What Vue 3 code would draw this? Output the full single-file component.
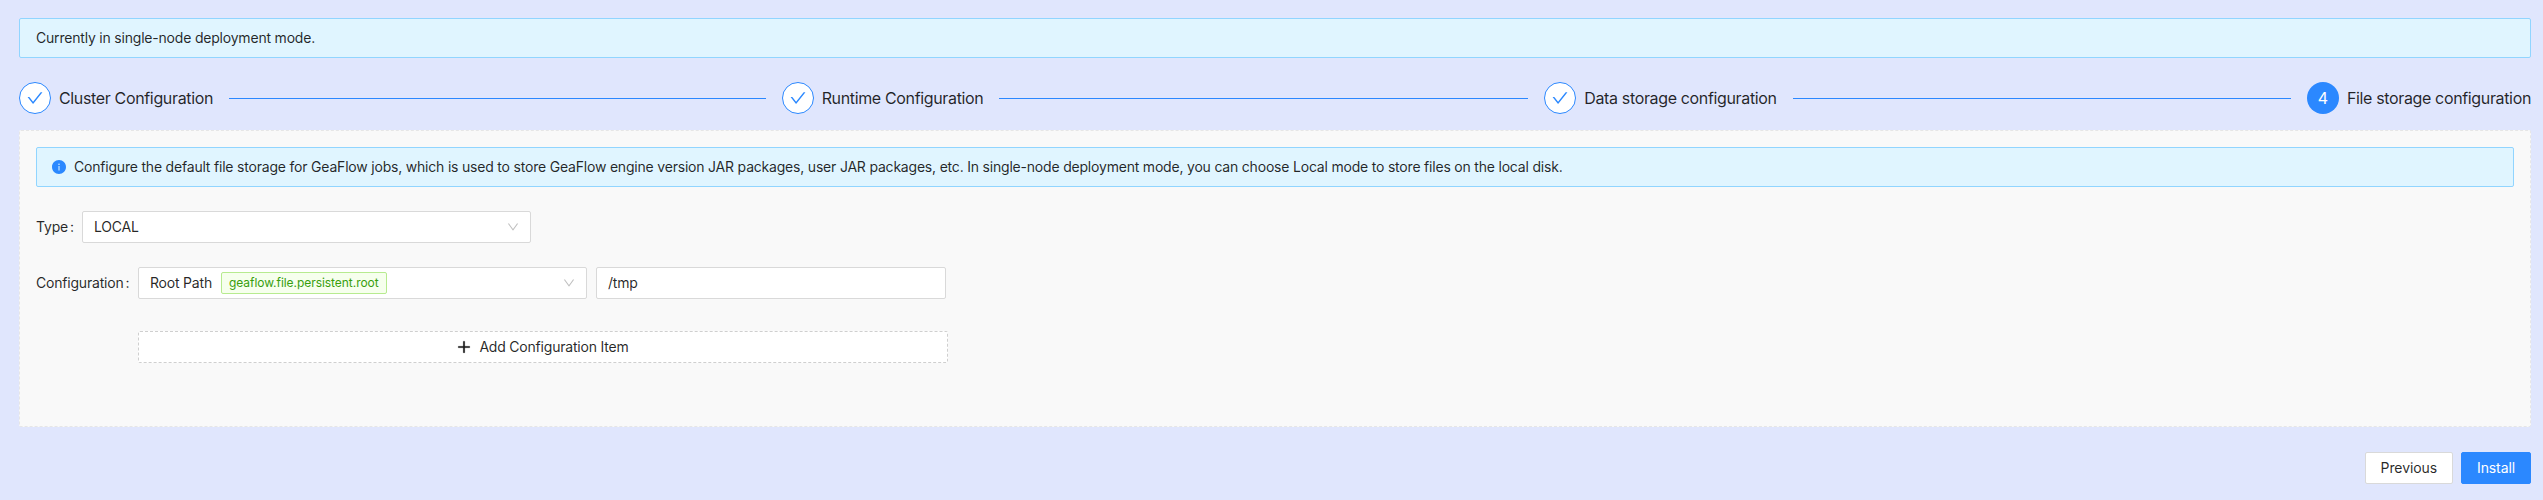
<script setup>
const check = 'M912 190h-69.9c-9.8 0-19.1 4.5-25.1 12.2L404.7 724.5 207 474a32 32 0 0 0-25.1-12.2H112c-6.7 0-10.4 7.7-6.3 12.9l273.9 347c12.8 16.2 37.4 16.2 50.3 0l488.4-618.9c4.1-5.1.4-12.8-6.3-12.8z'
const down = 'M884 256h-75c-5.1 0-9.9 2.5-12.9 6.6L512 654.2 227.9 262.6c-3-4.1-7.8-6.6-12.9-6.6h-75c-6.1 0-9.7 6.9-6.1 11.9l352.2 485.4c12.8 17.6 39 17.6 51.7 0l352.2-485.4c3.7-5 .1-11.9-6-11.9z'
const info = 'M512 64C264.6 64 64 264.6 64 512s200.6 448 448 448 448-200.6 448-448S759.4 64 512 64zm32 664c0 4.4-3.6 8-8 8h-48c-4.4 0-8-3.6-8-8V456c0-4.4 3.6-8 8-8h48c4.4 0 8 3.6 8 8v272zm-32-344a48.01 48.01 0 0 1 0-96 48.01 48.01 0 0 1 0 96z'
const plus = 'M482 152h60q8 0 8 8v704q0 8-8 8h-60q-8 0-8-8V160q0-8 8-8Z M192 474h672q8 0 8 8v60q0 8-8 8H160q-8 0-8-8v-60q0-8 8-8Z'
const steps = ['Cluster Configuration', 'Runtime Configuration', 'Data storage configuration']
</script>

<template>
  <div class="page">
    <div class="alert top-alert">Currently in single-node deployment mode.</div>

    <div class="steps">
      <div v-for="s in steps" :key="s" class="step">
        <span class="circle done">
          <svg viewBox="64 64 896 896" width="16" height="16" fill="#2b88ff"><path :d="check" /></svg>
        </span>
        <span class="step-title">{{ s }}</span>
        <span class="line"></span>
      </div>
      <div class="step last">
        <span class="circle active">4</span>
        <span class="step-title">File storage configuration</span>
      </div>
    </div>

    <div class="panel">
      <div class="alert info-alert">
        <svg class="info-icon" viewBox="64 64 896 896" width="14" height="14" fill="#2b88ff"><path :d="info" /></svg>
        <span>Configure the default file storage for GeaFlow jobs, which is used to store GeaFlow engine version JAR packages, user JAR packages, etc. In single-node deployment mode, you can choose Local mode to store files on the local disk.</span>
      </div>

      <div class="row type-row">
        <label class="label">Type<span class="colon">:</span></label>
        <div class="control select">
          <span>LOCAL</span>
          <svg class="arrow" viewBox="64 64 896 896" width="12" height="12" fill="#bfbfbf"><path :d="down" /></svg>
        </div>
      </div>

      <div class="row config-row">
        <label class="label">Configuration<span class="colon">:</span></label>
        <div class="control select">
          <span class="path-name">Root Path</span>
          <span class="tag">geaflow.file.persistent.root</span>
          <svg class="arrow" viewBox="64 64 896 896" width="12" height="12" fill="#bfbfbf"><path :d="down" /></svg>
        </div>
        <div class="control input">/tmp</div>
      </div>

      <div class="add-wrap">
        <div class="add">
          <svg viewBox="64 64 896 896" width="14" height="14" fill="#1a1a1a" stroke="#1a1a1a" stroke-width="40"><path :d="plus" /></svg>
          <span>Add Configuration Item</span>
        </div>
      </div>
    </div>

    <div class="footer">
      <div class="btn">Previous</div>
      <div class="btn primary">Install</div>
    </div>
  </div>
</template>

<style>
html, body { margin: 0; background: #e0e6fd; }
</style>

<style scoped>
.page {
  box-sizing: border-box;
  height: 500px;
  padding: 18px 12px 0 19px;
  background: #e0e6fd;
  font-family: Inter, "Liberation Sans", sans-serif;
  font-size: 14px;
  line-height: 22px;
  letter-spacing: -0.2px;
  color: rgba(0, 0, 0, 0.85);
}
.alert {
  box-sizing: border-box;
  height: 40px;
  background: #e0f5ff;
  border: 1px solid #91d5ff;
  border-radius: 2px;
  display: flex;
  align-items: center;
}
.top-alert { padding: 0 16px; }
.steps { display: flex; margin-top: 24px; height: 32px; }
.step { flex: 1; display: flex; align-items: center; min-width: 0; }
.step.last { flex: none; }
.circle {
  box-sizing: border-box;
  width: 32px;
  height: 32px;
  border-radius: 50%;
  flex: none;
  display: flex;
  align-items: center;
  justify-content: center;
  font-size: 16px;
}
.circle.done { border: 1px solid #2b88ff; background: #fff; }
.circle.active { background: #2b88ff; color: #fff; }
.step-title { margin-left: 8px; font-size: 16px; letter-spacing: -0.35px; white-space: nowrap; }
.line { flex: 1; height: 1px; margin: 0 16px; background: #2b88ff; }
.panel {
  box-sizing: border-box;
  height: 297px;
  margin-top: 16px;
  padding: 16px;
  background: #f9f9f9;
  border: 1px dashed #e6e6e6;
  border-radius: 2px;
}
.info-alert { padding: 0 15px; }
.info-icon { flex: none; margin-right: 8px; }
.row { display: flex; align-items: center; }
.type-row { margin-top: 24px; }
.config-row { margin-top: 24px; }
.label { white-space: nowrap; width: 46px; flex: none; }
.config-row .label { width: 102px; }
.colon { margin-left: 2px; }
.control {
  box-sizing: border-box;
  height: 32px;
  background: #fff;
  border: 1px solid #d9d9d9;
  border-radius: 2px;
  display: flex;
  align-items: center;
  padding: 0 11px;
}
.select { width: 449px; position: relative; }
.arrow { position: absolute; right: 11px; top: 9px; }
.path-name { margin-right: 9px; }
.tag {
  box-sizing: border-box;
  height: 22px;
  padding: 0 7px;
  display: flex;
  align-items: center;
  font-size: 12px;
  line-height: 20px;
  letter-spacing: -0.05px;
  color: #389e0d;
  background: #f6ffed;
  border: 1px solid #b7eb8f;
  border-radius: 2px;
}
.input { width: 350px; margin-left: 9px; }
.add-wrap { margin-top: 32px; padding-left: 102px; }
.add {
  box-sizing: border-box;
  width: 810px;
  height: 32px;
  background: #fff;
  border: 1px dashed #cfcfcf;
  border-radius: 2px;
  display: flex;
  align-items: center;
  justify-content: center;
  gap: 8px;
}
.footer { display: flex; justify-content: flex-end; gap: 8px; margin-top: 25px; }
.btn {
  box-sizing: border-box;
  height: 32px;
  padding: 0 15px;
  display: flex;
  align-items: center;
  background: #fff;
  border: 1px solid #d9d9d9;
  border-radius: 2px;
  letter-spacing: -0.1px;
}
.btn.primary { background: #2b88ff; border-color: #2b88ff; color: #fff; }
</style>
